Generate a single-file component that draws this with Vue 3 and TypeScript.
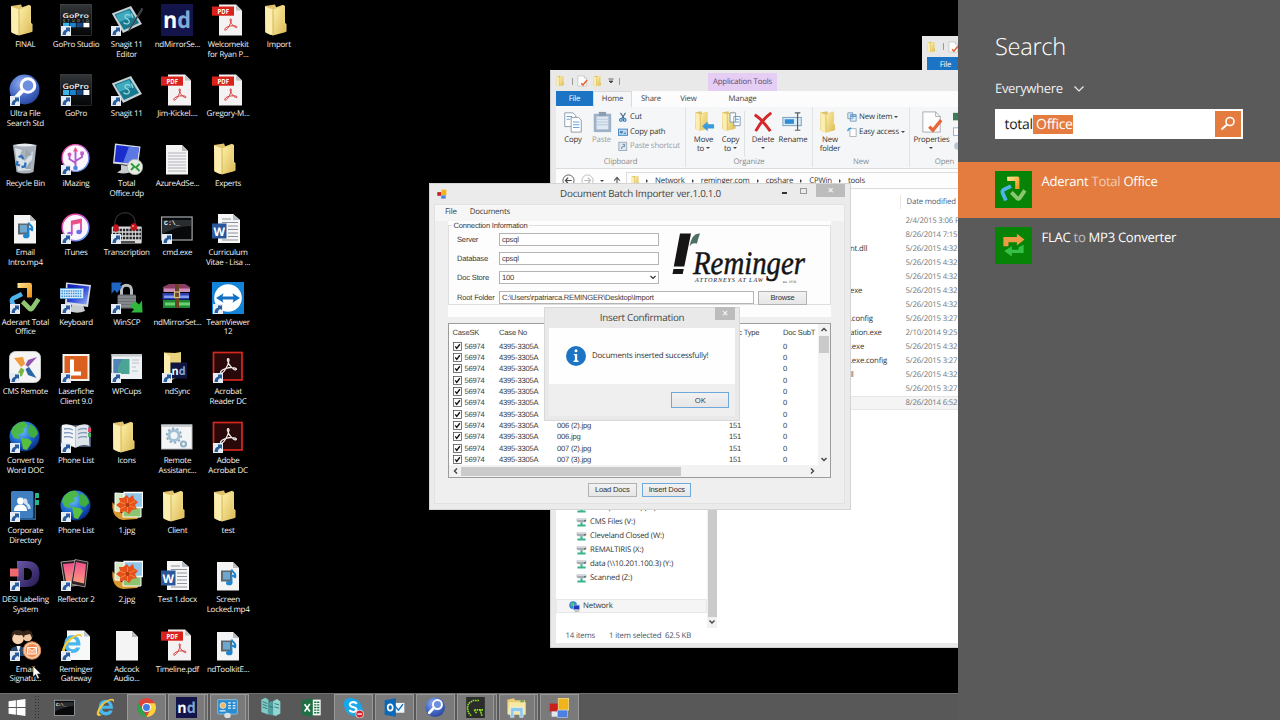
<template>
  <div class="desktop">
    <svg class="sprite" aria-hidden="true">
      <defs>
        <linearGradient id="gFolder" x1="0" x2="1" y1="0" y2="1">
          <stop offset="0" stop-color="#fdf0a8" />
          <stop offset="1" stop-color="#dcb955" />
        </linearGradient>
        <linearGradient id="gDark" x1="0" x2="0" y1="0" y2="1">
          <stop offset="0" stop-color="#34383b" />
          <stop offset="0.5" stop-color="#15181a" />
          <stop offset="1" stop-color="#050607" />
        </linearGradient>
        <linearGradient id="gScreen" x1="0" x2="1" y1="0" y2="1">
          <stop offset="0" stop-color="#0a16a8" />
          <stop offset="0.5" stop-color="#2c48d8" />
          <stop offset="1" stop-color="#9cb8f6" />
        </linearGradient>
        <linearGradient id="gRing" x1="0" x2="1" y1="0" y2="1">
          <stop offset="0" stop-color="#ff4f8d" />
          <stop offset="0.5" stop-color="#c75ae0" />
          <stop offset="1" stop-color="#38b8f8" />
        </linearGradient>
        <linearGradient id="gReflect" x1="0" x2="0" y1="0" y2="1">
          <stop offset="0" stop-color="#ee4f8c" />
          <stop offset="1" stop-color="#ff9c7c" />
        </linearGradient>
        <linearGradient id="gOrange" x1="0" x2="1" y1="0" y2="1">
          <stop offset="0" stop-color="#ffdf8c" />
          <stop offset="1" stop-color="#f09418" />
        </linearGradient>
        <linearGradient id="gDesi" x1="0" x2="1" y1="0" y2="1">
          <stop offset="0" stop-color="#6a58a8" />
          <stop offset="1" stop-color="#241850" />
        </linearGradient>
        <radialGradient id="gGlobe" cx="0.4" cy="0.3" r="0.7">
          <stop offset="0" stop-color="#6cc4fa" />
          <stop offset="0.6" stop-color="#1c68d0" />
          <stop offset="1" stop-color="#0a2f86" />
        </radialGradient>
        <radialGradient id="gFind" cx="0.4" cy="0.3" r="0.75">
          <stop offset="0" stop-color="#93aef0" />
          <stop offset="0.6" stop-color="#4468c4" />
          <stop offset="1" stop-color="#27439c" />
        </radialGradient>
      </defs>

      <symbol id="shortcut" viewBox="0 0 10 10">
        <rect width="10" height="10" fill="#e4ebf3" />
        <path d="M1.500 9C1.500 6 3 4 5 3.800V1.400H9V6L7.400 4.900C5.400 5.600 4.800 7 5 9Z" fill="#2a5c9e" />
      </symbol>
      <symbol id="folder" viewBox="0 0 32 32">
        <path d="M2 2L12 0.500L13 3V26L7.500 31L2 28Z" fill="#dfc26a" />
        <path d="M12.500 3.500L20 0.800L22 2V19L23.500 20V27.500L12 30Z" fill="#ecd683" />
        <path d="M2 2.500L10 5.500V31.500L2.800 28.800Z" fill="#fbeeae" />
        <path d="M10 5.500L20.500 2.500V19L22.800 20V28L10 31.500Z" fill="url(#gFolder)" />
        <path d="M10 5.500V31" stroke="#c9a748" stroke-width="0.800" />
      </symbol>
      <symbol id="gopro" viewBox="0 0 32 32">
        <rect x="0.200" y="0.200" width="31.500" height="31.500" fill="url(#gDark)" stroke="#4a4d50" stroke-width="0.500" />
        <text x="2.500" y="15" font-size="7.500" font-family="Open Sans, sans-serif" font-weight="600" textLength="26.500" lengthAdjust="spacingAndGlyphs" fill="#f2f2f2">GoPro</text>
        <rect x="3" y="16" width="6" height="5" fill="#3cb4e8" />
        <rect x="9.800" y="16" width="6" height="5" fill="#1d84cc" />
        <rect x="16.600" y="16" width="6" height="5" fill="#15498c" />
        <rect x="23.400" y="16" width="6" height="5" fill="#fff" />
      </symbol>
      <symbol id="goprostudio" viewBox="0 0 32 32">
        <rect x="0.200" y="0.200" width="31.500" height="31.500" fill="url(#gDark)" stroke="#55585b" stroke-width="0.500" />
        <text x="2.500" y="13.500" font-size="6.500" font-family="Open Sans, sans-serif" font-weight="600" textLength="26.500" lengthAdjust="spacingAndGlyphs" fill="#f2f2f2">GoPro</text>
        <text x="3" y="17.600" font-size="3.800" font-family="Open Sans, sans-serif" textLength="26" fill="#c8c8c8">STUDIO</text>
        <rect x="3" y="18.800" width="6" height="4.500" fill="#3cb4e8" />
        <rect x="9.800" y="18.800" width="6" height="4.500" fill="#1d84cc" />
        <rect x="16.600" y="18.800" width="6" height="4.500" fill="#15498c" />
        <rect x="23.400" y="18.800" width="6" height="4.500" fill="#fff" />
      </symbol>
      <symbol id="snagit" viewBox="0 0 32 32">
        <path d="M0.800 9.500L20 2L31 20L12 29Z" fill="#c9d0d4" />
        <path d="M3.500 10.500L18.800 4.500L28 19L13 26Z" fill="#17788e" />
        <path d="M5 11L18 6L22 13L8 18Z" fill="#3fa9bd" />
        <path d="M19 11.500C16 9.500 12.500 11.500 14.500 14C17 15.500 20 17 17.500 19.500C15.500 20.500 13.500 19.500 12.500 18.500M20.500 9.500L22 14" fill="none" stroke="#9fd6e0" stroke-width="1.200" />
      </symbol>
      <symbol id="snagedit" viewBox="0 0 32 32">
        <use href="#snagit" width="32" height="32" />
        <path d="M31 4L18 25L17 27L18.500 26.500L31.500 6Z" fill="#2a2f33" stroke="#6a747a" stroke-width="0.500" />
      </symbol>
      <symbol id="nd" viewBox="0 0 32 32">
        <rect width="32" height="32" fill="#13144a" />
        <text x="2" y="24" font-size="23" font-family="Open Sans, sans-serif" font-weight="700" textLength="28" lengthAdjust="spacingAndGlyphs" fill="#fff">n<tspan fill="#7fa9d8">d</tspan></text>
      </symbol>
      <symbol id="tristar" viewBox="0 0 16 16">
        <path d="M1.500 14C0.500 12 4 10 8 9.300C12 8.800 15.500 9.500 15 10.800C14 12.500 8.500 8 7.300 3C7 1 8.800 0.800 8.600 3C8 7.500 3.500 15 1.500 14Z" fill="none" stroke="currentColor" stroke-width="1.100" />
      </symbol>
      <symbol id="page" viewBox="0 0 32 32">
        <path d="M5 2H21L27 8V31.500H5Z" fill="#f4f4f4" />
        <path d="M21 2V8H27Z" fill="#b9bcc0" />
      </symbol>
      <symbol id="pdf" viewBox="0 0 32 32">
        <path d="M7 0.500H24L30 6.500V31.500H7Z" fill="#f3f1f1" />
        <path d="M24 0.500V6.500H30Z" fill="#c4c4c4" />
        <rect y="2.500" width="22" height="9.200" fill="#d8221c" />
        <text x="5.500" y="9.800" font-size="7" font-family="Open Sans, sans-serif" font-weight="700" textLength="11.500" lengthAdjust="spacingAndGlyphs" fill="#fff">PDF</text>
        <use href="#tristar" x="11.500" y="13.500" width="14.500" height="14.500" color="#d8383a" />
      </symbol>
      <symbol id="finder" viewBox="0 0 32 32">
        <circle cx="15.500" cy="15.500" r="15" fill="url(#gFind)" />
        <path d="M14.500 15.500L6.500 24" stroke="#fff" stroke-width="4.200" stroke-linecap="round" />
        <circle cx="19" cy="11.500" r="6.800" fill="#6d8fe0" stroke="#fff" stroke-width="3" />
      </symbol>
      <symbol id="recycle" viewBox="0 0 32 32">
        <path d="M4 2L27.500 2L24.500 29Q16 32 7.500 29Z" fill="#a9b2ba" />
        <path d="M4 2Q16 5 27.500 2Q16 -1 4 2Z" fill="#e8edf0" />
        <path d="M6 5L13 7L10 14L16 18L24 8L22 27L9 28Z" fill="#d9e1e7" />
        <path d="M17 6L23 12L16 14ZM20 20L23 17L22 26L16 26Z" fill="#9aa6b0" />
        <path d="M9.500 14L12.500 13L14.500 16M8.500 18L8 21.500L11 22.500M12.500 24L16 23.500L16.500 19.500" fill="none" stroke="#2f70bd" stroke-width="2.300" />
      </symbol>
      <symbol id="imazing" viewBox="0 0 32 32">
        <circle cx="15.500" cy="15" r="13.400" fill="#fbf7fd" stroke="url(#gRing)" stroke-width="1.400" />
        <path d="M15.500 24V7M15.500 20L9.500 16V12M15.500 18L22 14V11" fill="none" stroke="#b05ad0" stroke-width="1.900" />
        <path d="M15.500 4L18 8.500H13Z" fill="#f0508f" />
        <circle cx="9.500" cy="11.500" r="2" fill="#d856b8" />
        <rect x="20.300" y="8.500" width="3.600" height="3.600" fill="#c85ad0" />
        <circle cx="15.500" cy="25" r="2.300" fill="#4888e0" />
      </symbol>
      <symbol id="monitor" viewBox="0 0 32 32">
        <path d="M10 21L22 22L23 28Q16 32 8 29L11 26Z" fill="#c9cdd2" />
        <path d="M4 0.500L30.500 4L26 24L0.800 19Z" fill="#d7dce2" />
        <path d="M5.300 2L28.800 5L25 21.500L3 17.500Z" fill="url(#gScreen)" />
      </symbol>
      <symbol id="rdp" viewBox="0 0 32 32">
        <path d="M10 22L19 23L20 29Q14 31.500 6 29.500L10 27Z" fill="#c9cdd2" />
        <path d="M4 0.500L29.500 3.500L27 23L2 20.500Z" fill="#d7dce2" />
        <path d="M5.300 2L28 4.800L25.500 21L3.500 18.800Z" fill="#1a2ccc" />
        <path d="M18 3.500L28 4.800L25.500 21L12 19.700Z" fill="#5c78e4" />
        <circle cx="24" cy="24" r="7.700" fill="#e6ece4" stroke="#a8b2a6" stroke-width="0.700" />
        <path d="M20 20.500L23.300 23.500L20 27M28.500 21L25 24.500L28.500 28" fill="none" stroke="#2f9a3c" stroke-width="1.900" />
      </symbol>
      <symbol id="textfile" viewBox="0 0 32 32">
        <use href="#page" width="32" height="32" />
        <path d="M7 10H25M7 13H25M7 16H25M7 19H25M7 22H25M7 25H25M7 28H25" stroke="#a7acb2" stroke-width="0.900" />
      </symbol>
      <symbol id="video" viewBox="0 0 32 32">
        <path d="M5 3H21L27 9V31.500H5Z" fill="#f4f4f4" />
        <path d="M21 3V9H27Z" fill="#b9bcc0" />
        <rect x="9" y="11.500" width="11" height="11" fill="#5c6870" />
        <rect x="11" y="13" width="7" height="7.500" fill="#6fa7cf" />
        <path d="M19.500 10.500C20 14 25 13 23 19C23 16.500 20.500 16.500 19.500 16.500V24" fill="none" stroke="#1e86d0" stroke-width="1.900" />
        <ellipse cx="17.200" cy="24" rx="3.200" ry="2.300" fill="#1e86d0" />
      </symbol>
      <symbol id="itunes" viewBox="0 0 32 32">
        <circle cx="15.500" cy="15.500" r="13.300" fill="#fbf6fc" stroke="url(#gRing)" stroke-width="1.500" />
        <path d="M11.800 22V9.500L21 7.500V20" fill="none" stroke="#d250a8" stroke-width="1.800" />
        <path d="M11.800 9.500L21 7.500V11L11.800 13Z" fill="#ef4f86" />
        <ellipse cx="9.800" cy="22" rx="2.700" ry="2.200" fill="#9a60e0" />
        <ellipse cx="19" cy="20" rx="2.700" ry="2.200" fill="#6c70e8" />
      </symbol>
      <symbol id="headset" viewBox="0 0 32 32">
        <rect x="0.700" y="14.500" width="30" height="17" rx="1" fill="#d6d8da" />
        <path d="M2 18H30M2 22H30M2 26H30" stroke="#222" stroke-width="2.600" stroke-dasharray="2.300 1" />
        <path d="M8 30H24" stroke="#222" stroke-width="1.500" />
        <path d="M4 13C2 -3 26 -4 24 13" fill="none" stroke="#2b2b2f" stroke-width="1.300" />
        <ellipse cx="5" cy="16" rx="2.800" ry="3.800" fill="#c6141c" />
        <ellipse cx="22.800" cy="15" rx="3.300" ry="3.800" fill="#c6141c" />
        <circle cx="22" cy="14" r="1" fill="#ff8c8c" />
      </symbol>
      <symbol id="cmd" viewBox="0 0 32 32">
        <rect x="0.600" y="5" width="30.500" height="23" fill="#08090a" stroke="#a4a8ab" stroke-width="1.200" />
        <path d="M1.500 8H30V14Q16 14 1.500 22Z" fill="#2a2d30" />
        <text x="3" y="13" font-size="6.500" font-family="Liberation Mono, monospace" font-weight="700" fill="#f2f2f2">C:\_</text>
      </symbol>
      <symbol id="word" viewBox="0 0 32 32">
        <path d="M6 2H21L28 8V31H6Z" fill="#f6f6f6" />
        <path d="M21 2V8H28Z" fill="#b6bcc4" />
        <path d="M10 7H19M10 10.500H26M16 14H26M16 17.500H26M16 21H26M16 24.500H26M10 28H26" stroke="#8e949b" stroke-width="1.100" />
        <rect y="11.500" width="14.500" height="15" fill="#2b579a" />
        <text x="1.500" y="23.500" font-size="12" font-family="Open Sans, sans-serif" font-weight="700" textLength="11.500" lengthAdjust="spacingAndGlyphs" fill="#fff">W</text>
      </symbol>
      <symbol id="aderant" viewBox="0 0 32 32">
        <path d="M8.500 3.500L20.500 3.200V15.500" fill="none" stroke="url(#gOrange)" stroke-width="5" stroke-linejoin="round" />
        <path d="M13 12L4 16.500Q2 18 3.500 21L7 29" fill="none" stroke="#4fb4ec" stroke-width="4.500" />
        <path d="M13.500 19.500L20.500 26.500Q22 28 23.500 26L29.500 17" fill="none" stroke="#8cc66f" stroke-width="4.600" />
      </symbol>
      <symbol id="oskeyboard" viewBox="0 0 32 32">
        <path d="M12 22L23 23L25 29Q18 32 10 29.500Z" fill="#c9cdd2" />
        <path d="M6 0.500L31 3L28 25L5 22Z" fill="#d7dce2" />
        <path d="M7.500 2L29.300 4.500L26.500 22.500L7 20Z" fill="url(#gScreen)" />
        <rect y="6.500" width="23.500" height="10" fill="#d8ecfb" stroke="#4b9ade" stroke-width="0.800" />
        <path d="M1.500 9H22M1.500 11.600H22M1.500 14.200H22" stroke="#3c90d8" stroke-width="1.500" stroke-dasharray="1.500 0.800" />
      </symbol>
      <symbol id="winscp" viewBox="0 0 32 32">
        <path d="M10.500 14V8C10.500 1.500 20.500 1.500 20.500 8V14" fill="none" stroke="#b8bcc0" stroke-width="3" />
        <rect x="6.500" y="12.500" width="18.500" height="14" rx="1.500" fill="#6d7175" />
        <path d="M7 15H25M7 18H25M7 21H25M7 24H25" stroke="#9ba0a4" stroke-width="1" />
        <path d="M0.500 0.500H11L9 3L11 5L6 11L3.500 8L0.500 12Z" fill="#1f66c4" />
        <path d="M31.500 30.500H20L23 27.500L19 24L24 19L28 22.500L31 18.500Z" fill="#2fb83c" />
      </symbol>
      <symbol id="winrar" viewBox="0 0 32 32">
        <path d="M2 5L8 2H24L29 5V10H2Z" fill="#8a3f62" />
        <path d="M3 6.500H29V10H3Z" fill="#cf8fb8" />
        <path d="M1.500 11H28V17.500H1.500Z" fill="#2b3fae" />
        <path d="M3 13.500H28V16H3Z" fill="#7f9cf0" />
        <path d="M2 18H29V26H2Z" fill="#1e8a34" />
        <path d="M4 20.500H29V23.500H4Z" fill="#6cd070" />
        <path d="M14 2H18V26H14Z" fill="#6e4426" />
        <rect x="13.500" y="10" width="5" height="5.500" fill="none" stroke="#d8c37c" stroke-width="1.200" />
      </symbol>
      <symbol id="teamviewer" viewBox="0 0 32 32">
        <rect width="32" height="32" fill="#1383d8" />
        <circle cx="16" cy="16" r="13.800" fill="#fff" />
        <path d="M4 16L11.500 11.200L10.500 14.600H21.500L20.500 11.200L28 16L20.500 20.800L21.500 17.400H10.500L11.500 20.800Z" fill="#1470c4" />
      </symbol>
      <symbol id="cms" viewBox="0 0 32 32">
        <rect x="0.500" y="0.500" width="31" height="31" rx="6" fill="#f4f4f4" stroke="#c8c8c8" />
        <path d="M5 7L14 6L16 13L12 16Z" fill="#f09a3c" />
        <path d="M28 6L19 9L16.500 14L19 16Z" fill="#8f55b0" />
        <path d="M6 27L13 25L15.500 19L12 16.500Z" fill="#7bb541" />
        <path d="M27.500 27L19 24L16.500 18L20 16Z" fill="#2a65a8" />
      </symbol>
      <symbol id="laserfiche" viewBox="0 0 32 32">
        <rect x="2.500" y="3" width="27" height="27" fill="#f7f1ec" />
        <rect x="4.500" y="5" width="23" height="23" fill="#d9601f" />
        <path d="M10 8.500H14V20.500H21V24.500H10Z" fill="#fff" />
      </symbol>
      <symbol id="wpcups" viewBox="0 0 32 32">
        <rect x="0.500" y="3" width="30.500" height="25" fill="#eef1f3" />
        <rect x="0.500" y="3" width="30.500" height="2.500" fill="#c4c9ce" />
        <rect x="2.500" y="8" width="16" height="15" fill="#4aa596" />
        <path d="M2.500 8H12Q6 14 7 23H2.500Z" fill="#4f84b4" />
        <path d="M21 9H28M21 12H28M21 16H25M21 20H27" stroke="#b9c0c6" stroke-width="1" />
      </symbol>
      <symbol id="ndsync" viewBox="0 0 32 32">
        <path d="M3 1.500L14 2L20 1V24L9 30L3 27Z" fill="#e8d27c" />
        <path d="M3 1.500L9 5V30L3 27Z" fill="#fbeeae" />
        <rect x="9.500" y="11.500" width="16.500" height="16" fill="#101542" />
        <text x="10.500" y="23.500" font-size="11.500" font-family="Open Sans, sans-serif" font-weight="700" textLength="14" lengthAdjust="spacingAndGlyphs" fill="#fff">n<tspan fill="#7fa9d8">d</tspan></text>
      </symbol>
      <symbol id="acrobat" viewBox="0 0 32 32">
        <rect x="1.500" y="1.500" width="28.500" height="27.500" fill="#290809" stroke="#d4281f" stroke-width="1.700" />
        <use href="#tristar" x="7" y="6" width="18.500" height="18.500" color="#f3eded" />
      </symbol>
      <symbol id="globe" viewBox="0 0 32 32">
        <circle cx="15.500" cy="15.500" r="15" fill="url(#gGlobe)" />
        <path d="M4 6Q10 0 16 1L19 5L14 8L15 11L9 14L11 18L5 17L2 11Z" fill="#4cb848" />
        <path d="M21 3Q28 6 29 13L25 17L20 15L19 9Z" fill="#3fae3f" />
        <path d="M12 17L20 18L23 21L18 29L14 28Z" fill="#58bf3f" />
      </symbol>
      <symbol id="book" viewBox="0 0 32 32">
        <path d="M0.500 6L2 4H29L31 6V26H0.500Z" fill="#44546a" />
        <path d="M2 4Q9 2 15.500 6V27Q9 22 1.500 25Z" fill="#f2f4f6" />
        <path d="M15.500 6Q22 2 28.500 4L29.500 25Q22 22 15.500 27Z" fill="#dfe4ea" />
        <path d="M4 8Q9 7 13 9M4 12Q9 11 13 13M4 16Q9 15 13 17M18 9Q22 7 27 8M18 13Q22 11 27 12M18 17Q22 15 27 16" fill="none" stroke="#7c98b8" stroke-width="1.300" />
        <rect x="28" y="7" width="3" height="4" fill="#e0486c" />
        <rect x="28" y="12" width="3" height="4" fill="#50b060" />
      </symbol>
      <symbol id="gears" viewBox="0 0 32 32">
        <rect x="0.500" y="4" width="30.500" height="24" fill="#f3f5f6" stroke="#b9bec3" />
        <rect x="0.500" y="3.500" width="30.500" height="2.500" fill="#c8cdd2" />
        <circle cx="13" cy="14.500" r="5" fill="none" stroke="#a3c0d4" stroke-width="3" />
        <circle cx="13" cy="14.500" r="7.200" fill="none" stroke="#8aa9c0" stroke-width="1.700" stroke-dasharray="2.300 2.220" />
        <circle cx="22.500" cy="23" r="2.500" fill="none" stroke="#93b2c8" stroke-width="2.200" />
      </symbol>
      <symbol id="directory" viewBox="0 0 32 32">
        <path d="M7 28H25.500V8H27V30H7Z" fill="#2b5f94" />
        <rect x="2" y="1" width="22.500" height="27" rx="1.500" fill="#3f7fc0" />
        <rect x="26" y="3" width="4" height="5" fill="#28b48c" />
        <rect x="26" y="10" width="4" height="5" fill="#28b48c" />
        <circle cx="11.500" cy="11" r="3.400" fill="#fff" />
        <path d="M5 21Q5 14.500 11.500 14.500Q18 14.500 18 21Z" fill="#fff" />
        <path d="M15 8.500Q19 8 18.500 13Q22 15 21.500 19H19Q18.500 15 15 13.500Z" fill="#d3e2f2" />
      </symbol>
      <symbol id="photos" viewBox="0 0 32 32">
        <path d="M1.500 12Q0 28 12 30L26 29L30 25L10 23Z" fill="#d89a30" />
        <path d="M4 3L22 4L21 22L4 21Z" fill="#d5e8c4" stroke="#fff" />
        <path d="M12 12H30V27H12Z" fill="#8cc470" stroke="#fff" />
        <path d="M13 2.500H31.500V17.500H13Z" fill="#8fc6ea" stroke="#fff" stroke-width="1.300" />
        <path d="M16 5L18 8L22 5L23 9L27 12L24 15L26 19L21 20L18 24L14 21L9 23L9 18L5 15L9 12L8 8L12 8Z" fill="#e8501c" />
        <path d="M16.500 8V22M9 12L24 18M24 11L9 19" stroke="#f38a3c" stroke-width="1" />
        <circle cx="16.500" cy="15" r="2" fill="#b03c10" />
      </symbol>
      <symbol id="desi" viewBox="0 0 32 32">
        <path fill-rule="evenodd" d="M8 2H17Q30.500 2 30.500 15Q30.500 28 17 28H8ZM15 9V21H17Q23 21 23 15Q23 9 17 9Z" fill="url(#gDesi)" />
        <rect x="1" y="9.500" width="8.500" height="8" fill="#ee6a70" />
      </symbol>
      <symbol id="reflector" viewBox="0 0 32 32">
        <path d="M1 3L15 1.500L19 26L5 28Z" fill="#241c20" stroke="#c9c4c4" stroke-width="0.800" />
        <path d="M3 5L14 4L17 24L6.500 25Z" fill="url(#gReflect)" />
        <path d="M15 0.500L28 3L25 28L11 25Z" fill="#2c2226" stroke="#b4aaaa" stroke-width="0.800" />
        <path d="M16 3L26 5L24 24.500L13 22Z" fill="url(#gReflect)" />
      </symbol>
      <symbol id="mailsig" viewBox="0 0 32 32">
        <circle cx="18.500" cy="7.500" r="4.800" fill="#f0c8a4" />
        <path d="M13 7Q13 1 19 1Q25 2 23 9L21 5Z" fill="#352319" />
        <path d="M0.500 27Q0 17 9 17Q18 17 18 27Z" fill="#28476e" />
        <path d="M7.500 17L9.500 24L11.500 17Z" fill="#f4f4f4" />
        <circle cx="9" cy="9.500" r="5.800" fill="#f6d2b0" />
        <path d="M3 9Q1 1 9 1Q17 1 15 9L13 6Q8 7 5 5Z" fill="#3c281c" />
        <circle cx="23" cy="21.500" r="8.800" fill="#f6c8a4" stroke="#d9814c" />
        <circle cx="23" cy="21.500" r="6.500" fill="#ee8850" />
        <path d="M18.500 18.500H27.500V25H18.500ZM18.500 18.500L23 22L27.500 18.500" fill="#f8b48c" stroke="#fff3ea" />
      </symbol>
      <symbol id="ielogo" viewBox="0 0 32 32">
        <path fill-rule="evenodd" d="M16 4Q27 4 27.500 18H11Q12 23 17 23Q20 23 21.500 20.500H27Q24.500 28 16.500 28Q5.500 27 5.500 16Q6 5 16 4ZM11 13.500H21.500Q21 8.500 16.300 8.500Q12 8.500 11 13.500Z" fill="#4ab8ee" />
        <path d="M28.500 9Q31 1 23 3Q11 7 5 18Q0 28 5.500 29Q8 29 10.500 27Q4 27 8 19Q14 9 23 5.500Q29 4 28.500 9Z" fill="#f5c838" />
      </symbol>
      <symbol id="iepage" viewBox="0 0 32 32">
        <path d="M7 1.500H24L30 7.500V31H7Z" fill="#f7f8f8" />
        <path d="M24 1.500V7.500H30Z" fill="#c0c5ca" />
        <use href="#ielogo" x="0" y="3" width="24" height="24" />
      </symbol>
      <symbol id="chrome" viewBox="0 0 32 32">
        <circle cx="16" cy="16" r="14.500" fill="#e0433a" />
        <path d="M3.500 8.800L12 22L17 30.500A14.500 14.500 0 0 1 3.500 8.800Z" fill="#2fa14f" />
        <path d="M16 9.500H29A14.500 14.500 0 0 1 16 30.500L22 19Z" fill="#fbd23c" />
        <circle cx="16" cy="16" r="6.800" fill="#fff" />
        <circle cx="16" cy="16" r="5.300" fill="#3f7de0" />
      </symbol>
      <symbol id="panelset" viewBox="0 0 32 32">
        <rect x="1" y="4" width="30" height="22" rx="1" fill="#2c8cd0" stroke="#9ed2f0" />
        <circle cx="9" cy="13" r="4.500" fill="#f0b860" stroke="#e8f4fb" />
        <path d="M17 9H21M17 13H21M17 17H21M24 9H28M24 13H28M24 17H28M4 21H13" stroke="#e8f6ff" stroke-width="2" />
        <ellipse cx="16" cy="28" rx="5" ry="4" fill="#d9dee2" />
      </symbol>
      <symbol id="servers" viewBox="0 0 32 32">
        <path d="M2 4L8 1L13 4V27L2 23Z" fill="#7ecac5" />
        <path d="M12 9L18 6L22 9V29L12 26Z" fill="#4e9c9c" />
        <path d="M20 6L26 3L31 7V25L24 29L20 27Z" fill="#91d6d1" />
        <path d="M4 7L11 10M4 11L11 14M4 15L11 18M22 10L29 12M22 15L29 17M14 14L20 16" stroke="#346f74" stroke-width="1.300" />
      </symbol>
      <symbol id="excel" viewBox="0 0 32 32">
        <rect x="14" y="4" width="16" height="24" fill="#f4f8f5" />
        <path d="M20 8H28M20 12H28M20 16H28M20 20H28M20 24H28" stroke="#217346" stroke-width="2.200" stroke-dasharray="3.500 1" />
        <path d="M1 5L18 2V30L1 27Z" fill="#1f7044" />
        <path d="M5.500 11L13.500 22M13.500 10.500L5.500 22" stroke="#fff" stroke-width="2.500" />
      </symbol>
      <symbol id="skype" viewBox="0 0 32 32">
        <rect x="1" y="1" width="20" height="20" rx="10" fill="#18a8ea" />
        <rect x="10" y="10" width="20" height="20" rx="10" fill="#18a8ea" />
        <circle cx="15.500" cy="15.500" r="12.500" fill="#18a8ea" />
        <path d="M21 10.500Q19 7.500 15 7.800Q10 8.500 10.500 12Q11 14.500 16 15.500Q21 16.500 20.500 19.500Q19.500 23 15 22.800Q11 22.500 10 19.500" fill="none" stroke="#fff" stroke-width="3.200" />
        <circle cx="25.500" cy="26" r="6" fill="#d21f2c" stroke="#fff" />
        <path d="M22 26H29" stroke="#fff" stroke-width="2" />
      </symbol>
      <symbol id="outlook" viewBox="0 0 32 32">
        <rect x="14" y="9" width="17" height="15" fill="#eef5fb" />
        <path d="M17 14L22 20L29 11" fill="none" stroke="#0b6cbd" stroke-width="2" />
        <path d="M1 5L18 2V30L1 27Z" fill="#0a68b8" />
        <ellipse cx="9.500" cy="16" rx="3.800" ry="4.800" fill="none" stroke="#fff" stroke-width="2.600" />
      </symbol>
      <symbol id="gdots" viewBox="0 0 32 36">
        <rect width="32" height="36" fill="#2b2d2b" />
        <path d="M22 6L12 6L4 11L2 19L4 27L9 33M14 22H30M24 22L27 32M14 22L18 28" fill="none" stroke="#8be01c" stroke-width="2.800" stroke-dasharray="2.800 1.200" />
      </symbol>
      <symbol id="explorer" viewBox="0 0 32 32">
        <path d="M2 4L12 2L14 5H29V26H2Z" fill="#e9cd74" />
        <path d="M4 8H30V27H3Z" fill="#f7e9a4" />
        <rect x="22" y="5" width="5" height="3" fill="#58a85c" />
        <path d="M7 31V18Q7 16 9 16H24Q26 16 26 18V31H21V22H12V31Z" fill="#8cc8ea" stroke="#e2f4fd" />
      </symbol>
      <symbol id="winforms" viewBox="0 0 32 32">
        <rect x="1" y="10" width="13" height="12" fill="#c8201c" />
        <rect x="14" y="2" width="16" height="18" fill="#f0b41c" stroke="#fae49c" />
        <rect x="4" y="22" width="9" height="8" fill="#e4e8ee" />
        <rect x="13" y="20" width="15" height="11" fill="#4c7fe0" stroke="#b5ccf8" />
      </symbol>
      <symbol id="winlogo" viewBox="0 0 32 32">
        <path d="M1 5L14 3.200V15.300H1ZM15.500 3L31 1V15.300H15.500ZM1 16.700H14V28.800L1 27ZM15.500 16.700H31V31L15.500 29Z" fill="#fff" />
      </symbol>
      <symbol id="convert" viewBox="0 0 32 32">
        <path d="M4 17V6H20V2L29 9L20 16V12H10V17Z" fill="#f09a48" />
        <path d="M28 15V25H14V29L5 22.500L14 17V21H22V18Z" fill="#37c048" />
      </symbol>
      <symbol id="check" viewBox="0 0 24 24">
        <path d="M2 1H16L21 6V23H2Z" fill="#fdfdfd" stroke="#a9a9a9" />
        <path d="M16 1V6H21" fill="none" stroke="#a9a9a9" />
        <path d="M9 17L13 21L22 10" fill="none" stroke="#e4683c" stroke-width="3.600" />
      </symbol>
      <symbol id="netdrive" viewBox="0 0 16 14">
        <path d="M1 2H15V6L13 7.500H3L1 6Z" fill="#a7adb2" />
        <path d="M2 1.500H14V4H2Z" fill="#d8dcdf" />
        <rect x="12" y="4.500" width="2" height="1.500" fill="#333" />
        <path d="M8 7.500V11M2 12H14" stroke="#38b48c" stroke-width="3" />
      </symbol>
    </svg>

    <main class="icons">
      <div v-for="(row, r) in rows" :key="r" class="icon-row">
        <div v-for="(item, i) in row" :key="i" class="icon-cell">
          <div class="icon-art">
            <svg class="art"><use :href="`#${item.icon}`" /></svg>
            <svg v-if="item.link" class="arrow"><use href="#shortcut" /></svg>
          </div>
          <span class="icon-label">{{ item.label }}</span>
        </div>
      </div>
    </main>

    <section class="window behind">
      <div class="quick">
        <svg class="q-icon"><use href="#folder" /></svg>
        <i class="q-sep"></i>
        <svg class="q-icon"><use href="#check" /></svg>
      </div>
      <div class="tab-row"><span class="tab file">File</span></div>
    </section>

    <section class="window explorer">
      <header class="ex-title">
        <div class="quick">
          <svg class="q-icon"><use href="#folder" /></svg>
          <i class="q-sep"></i>
          <svg class="q-icon"><use href="#check" /></svg>
          <svg class="q-icon"><use href="#folder" /></svg>
          <svg class="q-more" viewBox="0 0 6 6"><path d="M0.500 1H5.500M1 3L3 5L5 3Z" stroke="#444" fill="#444" stroke-width="0.800" /></svg>
          <i class="q-sep"></i>
        </div>
        <span class="app-tools">Application Tools</span>
      </header>
      <nav class="tab-row">
        <span class="tab file">File</span>
        <span class="tab home">Home</span>
        <span class="tab share">Share</span>
        <span class="tab view">View</span>
        <span class="tab manage">Manage</span>
      </nav>
      <div class="ribbon">
        <div class="group clipboard">
          <div class="tools">
            <div class="tool copy">
              <svg class="big" viewBox="0 0 24 24">
                <path d="M3 2H12L15 5V17H3Z" fill="#fff" stroke="#8b98a6" />
                <path d="M10 7H18L21 10V23H10Z" fill="#fff" stroke="#8b98a6" />
                <path d="M5 6H11M5 9H9M12 12H19M12 15H19M12 18H19" stroke="#6ea3d8" stroke-width="1.300" />
              </svg>
              <span>Copy</span>
            </div>
            <div class="tool paste muted">
              <svg class="big" viewBox="0 0 24 24">
                <rect x="3" y="3" width="19" height="20" fill="#8fa6bf" />
                <path d="M6 6H19V20H6Z" fill="#dde7f2" />
                <path d="M6 9H19M6 12H19M6 15H19" stroke="#aabfd6" />
                <rect x="8.500" y="1" width="8" height="4.500" fill="#7a8ea4" />
              </svg>
              <span>Paste</span>
            </div>
            <div class="mini-list">
              <div class="mini">
                <svg viewBox="0 0 12 12"><path d="M3 1L7.500 8M9 1L4.500 8" stroke="#4c6b8a" stroke-width="1.300" /><circle cx="3.500" cy="9.500" r="1.600" fill="none" stroke="#2778c0" stroke-width="1.300" /><circle cx="8" cy="9.500" r="1.600" fill="none" stroke="#2778c0" stroke-width="1.300" /></svg>
                Cut
              </div>
              <div class="mini">
                <svg viewBox="0 0 12 12"><rect x="0.500" y="2.500" width="11" height="7.500" fill="#b9d8f2" stroke="#3a7fc0" /><path d="M2.500 7.500L3.500 5L4.500 7.500L5.500 5M7 7.500H9.500" stroke="#1c4f86" fill="none" stroke-width="0.900" /></svg>
                Copy path
              </div>
              <div class="mini muted">
                <svg viewBox="0 0 12 12"><rect x="1" y="1.500" width="9.500" height="10" fill="#dde5ee" stroke="#94a5b8" /><path d="M4 9.500Q4 6.500 7.500 6M5.500 4H8V7" stroke="#7088a4" fill="none" stroke-width="1.200" /></svg>
                Paste shortcut
              </div>
            </div>
          </div>
          <span class="group-name">Clipboard</span>
        </div>
        <div class="group organize">
          <div class="tools">
            <div class="tool">
              <svg class="big" viewBox="0 0 24 24">
                <use href="#folder" width="22" height="22" x="1" />
                <path d="M10 16.500L16 11.500V14.500H23V19H16V22Z" fill="#3a9bdc" />
              </svg>
              <span>Move<br />to <b class="caret"></b></span>
            </div>
            <div class="tool">
              <svg class="big" viewBox="0 0 24 24">
                <use href="#folder" width="22" height="22" x="1" />
                <path d="M11 2H17V12H11ZM15 6H22V16H15Z" fill="#fff" stroke="#7d96b0" />
                <path d="M17 9H20.500M17 12H20.500" stroke="#4b8fd0" />
              </svg>
              <span>Copy<br />to <b class="caret"></b></span>
            </div>
            <i class="tool-sep"></i>
            <div class="tool">
              <svg class="big" viewBox="0 0 24 24"><path d="M3 4Q11 9 20 22M21 2Q11 9 4 22" fill="none" stroke="#d4282a" stroke-width="3.200" /></svg>
              <span>Delete<br /><b class="caret"></b></span>
            </div>
            <div class="tool rename">
              <svg class="big" viewBox="0 0 24 24">
                <rect x="1" y="7" width="20" height="9" fill="#d8ecfa" stroke="#7597b4" />
                <rect x="3" y="9" width="10" height="5" fill="#2f8cd4" />
                <path d="M14 2H20M17 2V21M14 21H20" stroke="#555f68" stroke-width="1.300" />
              </svg>
              <span>Rename</span>
            </div>
          </div>
          <span class="group-name">Organize</span>
        </div>
        <div class="group new">
          <div class="tools">
            <div class="tool newfolder">
              <svg class="big"><use href="#folder" /></svg>
              <span>New<br />folder</span>
            </div>
            <div class="mini-list">
              <div class="mini">
                <svg viewBox="0 0 12 12"><path d="M1 1H7V8H1ZM4 3H11V11H4Z" fill="#e5f1fa" stroke="#6c93b6" /><path d="M4 5H11" stroke="#3d93d2" stroke-width="1.500" /></svg>
                New item <b class="caret"></b>
              </div>
              <div class="mini">
                <svg viewBox="0 0 12 12"><path d="M3.500 2H11V11.500H3.500Z" fill="#fff" stroke="#9aa6b1" /><path d="M1 5Q1 1.500 5 1.500" fill="none" stroke="#3d93d2" stroke-width="1.600" /></svg>
                Easy access <b class="caret"></b>
              </div>
            </div>
          </div>
          <span class="group-name">New</span>
        </div>
        <div class="group open">
          <div class="tools">
            <div class="tool props">
              <svg class="big"><use href="#check" /></svg>
              <span>Properties<br /><b class="caret"></b></span>
            </div>
            <div class="mini-list">
              <div class="mini"><svg viewBox="0 0 12 12"><rect y="1" width="12" height="9" fill="#3c7d58" /></svg></div>
              <div class="mini"><svg viewBox="0 0 12 12"><rect x="0.500" y="1" width="11" height="9" fill="#fff" stroke="#7fa4d8" /></svg></div>
              <div class="mini"><svg viewBox="0 0 12 12"><circle cx="6" cy="6" r="4.500" fill="#b7c4d4" /></svg></div>
            </div>
          </div>
          <span class="group-name">Open</span>
        </div>
      </div>
      <div class="address">
        <svg class="nav-btn" viewBox="0 0 14 14"><circle cx="7" cy="7" r="6" fill="none" stroke="#555" /><path d="M10.500 7H4M6.500 4L3.800 7L6.500 10" fill="none" stroke="#444" stroke-width="1.300" /></svg>
        <svg class="nav-btn off" viewBox="0 0 14 14"><circle cx="7" cy="7" r="6" fill="none" stroke="#bbb" /><path d="M3.500 7H10M7.500 4L10.200 7L7.500 10" fill="none" stroke="#bbb" stroke-width="1.300" /></svg>
        <b class="caret"></b>
        <svg class="up" viewBox="0 0 10 12"><path d="M5 11V2M1.500 5.500L5 1.500L8.500 5.500" fill="none" stroke="#555" stroke-width="1.400" /></svg>
        <div class="crumbs">
          <svg class="q-icon"><use href="#folder" /></svg>
          <template v-for="crumb in crumbs" :key="crumb">
            <b class="chev"></b><span>{{ crumb }}</span>
          </template>
        </div>
      </div>
      <div class="ex-body">
        <aside class="tree">
          <div v-for="drive in drives" :key="drive" class="drive">
            <svg><use href="#netdrive" /></svg>{{ drive }}
          </div>
          <div class="network">
            <svg viewBox="0 0 12 12"><circle cx="4.500" cy="4.500" r="4.200" fill="#2d8ad0" /><path d="M2 2L6 1.500L5 5L2 6Z" fill="#58c070" /><rect x="5" y="4.500" width="6.500" height="5" fill="#2038c0" stroke="#b4bcd0" stroke-width="0.800" /><path d="M6 11H11" stroke="#8a929c" /></svg>
            Network
          </div>
        </aside>
        <div class="tree-scroll">
          <div class="tree-thumb"></div>
          <svg viewBox="0 0 8 8"><path d="M1.500 2.500L4 5L6.500 2.500" fill="none" stroke="#444" stroke-width="1.400" /></svg>
        </div>
        <div class="files">
          <div class="file-row file-head"><span></span><span>Date modified</span></div>
          <div v-for="(f, i) in files" :key="i" class="file-row" :class="{ picked: i === files.length - 1 }">
            <span class="fname">{{ f.name }}</span><span class="fdate">{{ f.date }}</span>
          </div>
        </div>
      </div>
      <footer class="status"><span>14 items</span><span>1 item selected&nbsp; 62.5 KB</span></footer>
    </section>

    <section class="window importer">
      <header class="im-title">
        <svg class="app-icon"><use href="#winforms" /></svg>
        <span class="im-name">Document Batch Importer ver.1.0.1.0</span>
        <i class="min"></i>
        <i class="max"></i>
        <span class="close">✕</span>
      </header>
      <div class="im-body">
        <div class="menu"><span>File</span><span>Documents</span></div>
        <fieldset class="conn">
          <legend>Connection Information</legend>
          <div class="conn-top">
            <div class="fields">
              <label>Server</label><div class="input">cpsql</div>
              <label>Database</label><div class="input">cpsql</div>
              <label>Doc Store</label>
              <div class="input select">100<svg viewBox="0 0 8 8"><path d="M1.500 2.500L4 5L6.500 2.500" fill="none" stroke="#333" stroke-width="1.200" /></svg></div>
            </div>
            <svg class="logo" viewBox="0 0 136 56">
              <path d="M8 2.500H19L12.300 35.500H1.800ZM1.500 38H11.700L10.700 43H0.500Z" fill="#161414" />
              <path d="M28 2.500Q20 1.500 17.500 15.500Q20 11 25 12.500Q26 8 28 2.500Z" fill="#4e6f65" />
              <text x="21" y="43" font-size="33" font-family="Liberation Serif, serif" font-style="italic" textLength="112" lengthAdjust="spacingAndGlyphs" fill="#161414" stroke="#161414" stroke-width="0.500">Reminger</text>
              <text x="23" y="51" font-size="6.200" font-family="Liberation Serif, serif" font-style="italic" textLength="68" fill="#161414">ATTORNEYS AT LAW</text>
              <text x="111" y="51.500" font-size="3.500" font-family="Liberation Serif, serif" textLength="13" lengthAdjust="spacingAndGlyphs" fill="#333">est. 1958</text>
            </svg>
          </div>
          <div class="root">
            <label>Root Folder</label>
            <div class="input path">C:\Users\rpatriarca.REMINGER\Desktop\Import</div>
            <button type="button" class="btn browse">Browse</button>
          </div>
        </fieldset>
        <div class="list">
          <div class="list-top">
            <div class="table">
              <div class="tr th"><span>CaseSK</span><span>Case No</span><span></span><span>Doc Type</span><span>Doc SubT</span></div>
              <div v-for="(doc, i) in docs" :key="i" class="tr">
                <span class="sk"><svg viewBox="0 0 10 10"><rect x="0.500" y="0.500" width="9" height="9" fill="#fff" stroke="#444" stroke-width="0.800" /><path d="M2.500 4.800L4.200 7L7.600 2.500" fill="none" stroke="#111" stroke-width="1.500" /></svg>56974</span>
                <span>4395-3305A</span><span>{{ doc.name }}</span><span>{{ doc.type }}</span><span>0</span>
              </div>
            </div>
            <div class="vbar">
              <svg viewBox="0 0 8 8"><path d="M1.500 5.500L4 3L6.500 5.500" fill="none" stroke="#444" stroke-width="1.400" /></svg>
              <div class="vthumb"></div>
              <svg viewBox="0 0 8 8"><path d="M1.500 2.500L4 5L6.500 2.500" fill="none" stroke="#444" stroke-width="1.400" /></svg>
            </div>
          </div>
          <div class="hbar">
            <svg viewBox="0 0 8 8"><path d="M5.500 1.500L3 4L5.500 6.500" fill="none" stroke="#444" stroke-width="1.400" /></svg>
            <div class="hthumb"></div>
            <svg viewBox="0 0 8 8"><path d="M2.500 1.500L5 4L2.500 6.500" fill="none" stroke="#444" stroke-width="1.400" /></svg>
          </div>
        </div>
        <div class="actions">
          <button type="button" class="btn">Load Docs</button>
          <button type="button" class="btn focus">Insert Docs</button>
        </div>
      </div>
    </section>

    <section class="window confirm">
      <header class="cf-title">Insert Confirmation<span class="close">✕</span></header>
      <div class="cf-body">
        <svg viewBox="0 0 20 20"><circle cx="10" cy="10" r="10" fill="#1c74c4" /><circle cx="10" cy="4.800" r="1.500" fill="#fff" /><path d="M7.800 8H11.200V14.500H12.500V16H7.500V14.500H8.900V9.300H7.800Z" fill="#fff" /></svg>
        Documents inserted successfully!
      </div>
      <footer class="cf-foot"><button type="button" class="btn ok">OK</button></footer>
    </section>

    <aside class="search">
      <h1>Search</h1>
      <div class="scope">Everywhere<svg viewBox="0 0 12 8"><path d="M1.500 1.500L6 6L10.500 1.500" fill="none" stroke="#eee" stroke-width="1.200" /></svg></div>
      <div class="box">
        <span class="typed">total</span><span class="hint">&nbsp;Office</span>
        <span class="go">
          <svg viewBox="0 0 16 16"><circle cx="10" cy="5.500" r="4" fill="none" stroke="#fff" stroke-width="1.600" /><path d="M7 8.500L1.500 13.500" stroke="#fff" stroke-width="2" /></svg>
        </span>
      </div>
      <div class="results">
        <div class="result active">
          <span class="tile"><svg><use href="#aderant" /></svg></span>
          <span class="rname">Aderant <em>Total</em> Office</span>
        </div>
        <div class="result">
          <span class="tile"><svg><use href="#convert" /></svg></span>
          <span class="rname">FLAC <em>to</em> MP3 Converter</span>
        </div>
      </div>
    </aside>

    <footer class="taskbar">
      <div class="start"><svg><use href="#winlogo" /></svg></div>
      <i class="grip"></i>
      <div v-for="t in tasks" :key="t.icon" class="task" :class="{ open: t.open, stack: t.stack }">
        <svg><use :href="`#${t.icon}`" /></svg>
      </div>
    </footer>

    <svg class="cursor" viewBox="0 0 10 15"><path d="M1 1V12L3.700 9.500L5.500 13.800L7.300 13L5.500 8.900H9Z" fill="#fff" stroke="#222" stroke-width="0.600" /></svg>
  </div>
</template>

<script setup lang="ts">
interface DesktopItem {
  icon: string
  label: string
  link?: boolean
}

interface FileItem {
  name: string
  date: string
}

interface DocItem {
  name: string
  type: string
}

interface Task {
  icon: string
  open?: boolean
  stack?: boolean
}

const rows: DesktopItem[][] = [
  [
    { icon: 'folder', label: 'FINAL' },
    { icon: 'goprostudio', label: 'GoPro Studio', link: true },
    { icon: 'snagedit', label: 'Snagit 11\nEditor', link: true },
    { icon: 'nd', label: 'ndMirrorSe...' },
    { icon: 'pdf', label: 'Welcomekit\nfor Ryan P...' },
    { icon: 'folder', label: 'Import' },
  ],
  [
    { icon: 'finder', label: 'Ultra File\nSearch Std', link: true },
    { icon: 'gopro', label: 'GoPro', link: true },
    { icon: 'snagit', label: 'Snagit 11', link: true },
    { icon: 'pdf', label: 'Jim-Kickel....' },
    { icon: 'pdf', label: 'Gregory-M...' },
  ],
  [
    { icon: 'recycle', label: 'Recycle Bin' },
    { icon: 'imazing', label: 'iMazing', link: true },
    { icon: 'rdp', label: 'Total\nOffice.rdp' },
    { icon: 'textfile', label: 'AzureAdSe...' },
    { icon: 'folder', label: 'Experts' },
  ],
  [
    { icon: 'video', label: 'Email\nIntro.mp4' },
    { icon: 'itunes', label: 'iTunes', link: true },
    { icon: 'headset', label: 'Transcription', link: true },
    { icon: 'cmd', label: 'cmd.exe', link: true },
    { icon: 'word', label: 'Curriculum\nVitae - Lisa ...' },
  ],
  [
    { icon: 'aderant', label: 'Aderant Total\nOffice', link: true },
    { icon: 'oskeyboard', label: 'Keyboard', link: true },
    { icon: 'winscp', label: 'WinSCP', link: true },
    { icon: 'winrar', label: 'ndMirrorSet...' },
    { icon: 'teamviewer', label: 'TeamViewer\n12', link: true },
  ],
  [
    { icon: 'cms', label: 'CMS Remote', link: true },
    { icon: 'laserfiche', label: 'Laserfiche\nClient 9.0', link: true },
    { icon: 'wpcups', label: 'WPCups', link: true },
    { icon: 'ndsync', label: 'ndSync', link: true },
    { icon: 'acrobat', label: 'Acrobat\nReader DC', link: true },
  ],
  [
    { icon: 'globe', label: 'Convert to\nWord DOC', link: true },
    { icon: 'book', label: 'Phone List', link: true },
    { icon: 'folder', label: 'Icons' },
    { icon: 'gears', label: 'Remote\nAssistanc...' },
    { icon: 'acrobat', label: 'Adobe\nAcrobat DC', link: true },
  ],
  [
    { icon: 'directory', label: 'Corporate\nDirectory', link: true },
    { icon: 'globe', label: 'Phone List', link: true },
    { icon: 'photos', label: '1.jpg' },
    { icon: 'folder', label: 'Client' },
    { icon: 'folder', label: 'test' },
  ],
  [
    { icon: 'desi', label: 'DESI Labeling\nSystem', link: true },
    { icon: 'reflector', label: 'Reflector 2', link: true },
    { icon: 'photos', label: '2.jpg' },
    { icon: 'word', label: 'Test 1.docx' },
    { icon: 'video', label: 'Screen\nLocked.mp4' },
  ],
  [
    { icon: 'mailsig', label: 'Email\nSignatu...', link: true },
    { icon: 'iepage', label: 'Reminger\nGateway', link: true },
    { icon: 'page', label: 'Adcock\nAudio...' },
    { icon: 'pdf', label: 'Timeline.pdf' },
    { icon: 'video', label: 'ndToolkitE...' },
  ],
]

const crumbs = ['Network', 'reminger.com', 'cpshare', 'CPWin', 'tools']

const drives = [
  'Data (\\\\Atlanta) (U:)',
  'CMS Files (V:)',
  'Cleveland Closed (W:)',
  'REMALTIRIS (X:)',
  'data (\\\\10.201.100.3) (Y:)',
  'Scanned (Z:)',
]

const files: FileItem[] = [
  { name: '', date: '2/4/2015 3:06 PM' },
  { name: '', date: '8/26/2014 7:15' },
  { name: 'nt.dll', date: '5/26/2015 4:32' },
  { name: '', date: '5/26/2015 4:32' },
  { name: '', date: '5/26/2015 4:32' },
  { name: 'exe', date: '5/26/2015 4:32' },
  { name: '', date: '5/26/2015 4:32' },
  { name: '.config', date: '5/26/2015 3:27' },
  { name: 'ation.exe', date: '2/10/2014 9:25' },
  { name: '.exe', date: '5/26/2015 4:32' },
  { name: '.exe.config', date: '5/26/2015 3:27' },
  { name: 'll', date: '5/26/2015 4:32' },
  { name: '', date: '5/26/2015 3:27' },
  { name: '', date: '8/26/2014 6:52' },
]

const docs: DocItem[] = [
  ...Array.from({ length: 7 }, () => ({ name: '', type: '' })),
  { name: '006 (2).jpg', type: '151' },
  { name: '006.jpg', type: '151' },
  { name: '007 (2).jpg', type: '151' },
  { name: '007 (3).jpg', type: '151' },
]

const tasks: Task[] = [
  { icon: 'cmd' },
  { icon: 'ielogo' },
  { icon: 'chrome', open: true },
  { icon: 'nd', open: true, stack: true },
  { icon: 'panelset', open: true, stack: true },
  { icon: 'servers' },
  { icon: 'excel' },
  { icon: 'skype', open: true },
  { icon: 'outlook', open: true },
  { icon: 'finder', open: true },
  { icon: 'gdots', open: true, stack: true },
  { icon: 'explorer', open: true, stack: true },
  { icon: 'winforms', open: true },
]
</script>

<style>
body {
  background: #000;
}
</style>

<style scoped>
* {
  box-sizing: border-box;
}

.desktop {
  position: relative;
  width: 1280px;
  height: 720px;
  overflow: hidden;
  background: #000;
  font-family: 'Open Sans', 'Noto Sans', sans-serif;
  font-size: 7.8px;
  letter-spacing: -0.18px;
  color: #333;
  text-rendering: geometricPrecision;
}

.sprite {
  position: absolute;
  width: 0;
  height: 0;
}

svg {
  flex: none;
  letter-spacing: 0;
}

.icons {
  padding-top: 4.3px;
}

.icon-row {
  display: flex;
  height: 69.4px;
}

.icon-cell {
  display: flex;
  flex-direction: column;
  align-items: center;
  width: 50.7px;
}

.icon-art {
  position: relative;
  width: 32px;
  height: 32px;
}

.art {
  display: block;
  width: 32px;
  height: 32px;
}

.arrow {
  position: absolute;
  left: 0.5px;
  bottom: 0;
  width: 10px;
  height: 10px;
}

.icon-label {
  margin-top: 3.7px;
  color: #f4f4f4;
  font-size: 8px;
  letter-spacing: -0.26px;
  line-height: 9.9px;
  text-align: center;
  white-space: pre;
}

.window {
  position: absolute;
  display: flex;
  flex-direction: column;
}

.behind {
  left: 922px;
  top: 36px;
  width: 200px;
  height: 40px;
  padding-left: 5px;
  background: #e8e8e8;
}

.explorer {
  left: 550px;
  top: 70px;
  width: 480px;
  height: 578px;
  padding: 0 6px 4px 5px;
  background: #e9e9e9;
  border: 1px solid #cfcfcf;
  border-top-color: #e9e9e9;
}

.quick {
  display: flex;
  align-items: center;
  gap: 4.500px;
  height: 20px;
}

.behind .quick {
  height: 21px;
}

.q-icon {
  width: 11px;
  height: 12px;
}

.q-more {
  width: 6px;
  height: 6px;
}

.q-sep {
  width: 1px;
  height: 7px;
  background: #999;
}

.ex-title {
  display: flex;
  align-items: flex-end;
  height: 20px;
}

.ex-title .quick {
  width: 152px;
}

.app-tools {
  width: 69px;
  height: 18px;
  background: #e5cdf4;
  color: #62496f;
  line-height: 18px;
  text-align: center;
}

.tab-row {
  display: flex;
  flex: none;
  height: 16px;
  margin-right: -6px;
  background: #fcfcfc;
  line-height: 16.500px;
  text-align: center;
  color: #444;
}

.file {
  width: 37px;
  height: 15px;
  background: #1b75c4;
  color: #fff;
}

.home {
  width: 39px;
  background: #f5f6f7;
  border: solid #dadbdc;
  border-width: 1px 1px 0;
  line-height: 15px;
}

.share {
  width: 38px;
}

.view {
  width: 37px;
}

.manage {
  width: 71px;
}

.ribbon {
  display: flex;
  flex: none;
  height: 62px;
  margin-right: -6px;
  background: #f5f6f7;
  border: solid #dadbdc;
  border-width: 0 0 1px;
}

.group {
  display: flex;
  flex-direction: column;
  justify-content: space-between;
  flex: none;
  height: 60px;
  padding-top: 4px;
  border-right: 1px solid #e0e2e4;
}

.clipboard {
  width: 130px;
}

.organize {
  width: 127px;
}

.new {
  width: 97px;
}

.open {
  width: 80px;
}

.tools {
  display: flex;
}

.tool {
  display: flex;
  flex-direction: column;
  align-items: center;
  flex: none;
  width: 27px;
  line-height: 9px;
  text-align: center;
  white-space: nowrap;
}

.copy {
  width: 34px;
}

.paste {
  width: 23px;
  margin-right: 5px;
}

.organize .tools {
  padding-left: 4px;
}

.tool-sep + .tool {
  margin-left: 4px;
  width: 28px;
}

.tool.rename {
  width: 32px;
}

.newfolder {
  width: 34px;
}

.props {
  width: 43px;
}

.big {
  width: 22px;
  height: 22px;
  margin-bottom: 2.500px;
}

.tool-sep {
  width: 1px;
  height: 46px;
  background: #dfe1e3;
}

.mini-list {
  display: flex;
  flex-direction: column;
  margin-top: -1.500px;
}

.mini {
  display: flex;
  align-items: center;
  gap: 2px;
  height: 14.7px;
  white-space: nowrap;
}

.mini svg {
  width: 10px;
  height: 10px;
}

.muted {
  color: #9a9a9a;
}

.muted .big {
  opacity: 0.85;
}

.group-name {
  color: #8c8c8c;
  line-height: 9px;
  text-align: center;
}

.open .group-name {
  padding-right: 10px;
}

.caret {
  display: inline-block;
  border: 2px solid transparent;
  border-top: 2.500px solid #444;
  border-bottom: 0;
  vertical-align: 1.500px;
}

.address {
  display: flex;
  align-items: center;
  flex: none;
  height: 21px;
  margin-right: -6px;
  padding: 2px 0 0 6px;
  background: #fdfdfd;
  gap: 6px;
}

.nav-btn {
  width: 13px;
  height: 13px;
}

.up {
  width: 8px;
  height: 10px;
  margin-left: 3px;
}

.crumbs {
  display: flex;
  align-items: center;
  gap: 7px;
  height: 17px;
  flex: 1;
  margin-left: -1px;
  padding-left: 4px;
  border: 1px solid #dcdcdc;
}

.crumbs .q-icon {
  margin-right: -3px;
}

.chev {
  border: 2px solid transparent;
  border-left: 2.500px solid #444;
  border-right: 0;
}

.ex-body {
  display: flex;
  flex: 1;
  min-height: 0;
  margin-right: -6px;
  background: #fff;
}

.tree {
  display: flex;
  flex-direction: column;
  justify-content: flex-end;
  width: 151px;
  padding-bottom: 15px;
}

.drive {
  display: flex;
  align-items: center;
  gap: 3px;
  height: 14px;
  padding-left: 20px;
}

.drive svg {
  width: 11px;
  height: 10px;
}

.network {
  display: flex;
  align-items: center;
  gap: 3px;
  height: 14px;
  margin-top: 14px;
  padding-left: 12px;
  background: #f5f5f5;
  border: 1px solid #e8e8e8;
}

.network svg {
  width: 11px;
  height: 11px;
}

.tree-scroll {
  display: flex;
  flex-direction: column;
  align-items: center;
  width: 10px;
  padding-bottom: 1px;
  background: #f1f1f1;
}

.tree-thumb {
  flex: 1;
  width: 9px;
  background: #cbcbcb;
}

.tree-scroll svg {
  width: 8px;
  height: 10px;
}

.files {
  flex: 1;
  padding-top: 3.500px;
}

.file-row {
  display: flex;
  align-items: center;
  height: 14px;
  color: #777;
  white-space: nowrap;
}

.file-head {
  height: 17px;
  margin-bottom: 3.500px;
  color: #4c607a;
}

.file-row span:first-child {
  width: 183px;
  flex: none;
}

.file-row span.fname {
  padding-left: 133px;
  color: #333;
}

.file-row span + span {
  padding-left: 5.500px;
}

.file-head span + span {
  height: 14px;
  line-height: 14px;
  border-left: 1px solid #e8e8e8;
}

.picked {
  background: #f4f4f4;
  border: solid #e6e6e6;
  border-width: 1px 0;
}

.status {
  display: flex;
  align-items: center;
  flex: none;
  gap: 14px;
  height: 15px;
  margin-right: -6px;
  padding-left: 9.500px;
  background: #fff;
  color: #44546a;
}

.importer {
  left: 429px;
  top: 183px;
  width: 422px;
  height: 327px;
  padding: 0 5px 5px 4px;
  background: #ebebeb;
  border: 1px solid #d4d4d4;
}

.im-title {
  display: flex;
  flex: none;
  height: 20px;
}

.app-icon {
  width: 10px;
  height: 10px;
  margin: 5px 0 0 3px;
}

.im-name {
  flex: 1;
  padding-left: 52px;
  color: #444;
  font-size: 9.8px;
  letter-spacing: -0.24px;
  line-height: 20px;
  text-align: center;
}

.min {
  width: 5px;
  height: 2px;
  margin: 8px 13px 0 0;
  background: #333;
}

.max {
  width: 7px;
  height: 6px;
  margin: 4px 9px 0 0;
  border: 1px solid #999;
}

.close {
  width: 29px;
  height: 13px;
  background: #bcbcbc;
  color: #fff;
  font-family: 'DejaVu Sans', sans-serif;
  font-size: 8px;
  line-height: 13px;
  text-align: center;
}

.im-body {
  display: flex;
  flex-direction: column;
  flex: 1;
  padding: 0 13px;
  background: #efefef;
  border: 1px solid #e2e2e2;
  color: #3c3c3c;
  font-family: 'Liberation Sans', Arial, sans-serif;
  font-size: 7.600px;
  letter-spacing: -0.2px;
}

.menu {
  display: flex;
  gap: 13px;
  flex: none;
  height: 16px;
  margin: 0 -13px;
  padding-left: 10px;
  background: #f6f6f6;
  font-family: 'Open Sans', sans-serif;
  font-size: 7.900px;
  line-height: 15px;
}

.conn {
  display: flex;
  flex-direction: column;
  flex: none;
  position: relative;
  height: 96px;
  margin: 0;
  padding: 0 5px 0 9px;
  background: #fdfdfd;
  border: 0;
}

.conn::before {
  content: '';
  position: absolute;
  inset: 4px 0 0;
  border: 1px solid #dedede;
}

.conn legend {
  position: absolute;
  left: 4px;
  top: 0;
  padding: 0 1.500px;
  background: #fdfdfd;
  line-height: 9px;
}

.conn-top {
  display: flex;
  padding-top: 12px;
}

.fields {
  display: grid;
  grid-template-columns: 42px 160px;
  grid-auto-rows: 13px;
  row-gap: 6.200px;
  width: 215px;
}

.fields label,
.root label {
  line-height: 14px;
}

.input {
  height: 13px;
  padding-left: 2px;
  background: #fff;
  border: 1px solid #b4b4b4;
  line-height: 11px;
  white-space: nowrap;
}

.select {
  display: flex;
  justify-content: space-between;
}

.select svg {
  width: 8px;
  height: 11px;
  margin-right: 1px;
}

.logo {
  width: 136px;
  height: 56px;
  margin-top: -2px;
}

.root {
  display: flex;
  margin-top: 3.500px;
  position: relative;
}

.root label {
  width: 42px;
  flex: none;
}

.path {
  width: 255px;
}

.btn {
  height: 14px;
  padding: 0;
  border: 1px solid #b2b2b2;
  background: linear-gradient(#f2f2f2, #e6e6e6);
  color: #333;
  font: inherit;
  letter-spacing: inherit;
  line-height: 12px;
  text-align: center;
}

.browse {
  width: 49px;
  margin-left: 4px;
}

.list {
  display: flex;
  flex-direction: column;
  flex: none;
  height: 155px;
  margin-top: 6px;
  background: #fff;
  border: 1px solid #9c9c9c;
}

.list-top {
  display: flex;
  height: 141px;
}

.table {
  flex: 1;
  overflow: hidden;
}

.tr {
  display: grid;
  grid-template-columns: 46.500px 58px 172px 54px 40px;
  align-items: center;
  height: 11.350px;
  padding-left: 3.500px;
  white-space: nowrap;
}

.th {
  height: 16.500px;
}

.sk {
  display: flex;
  align-items: center;
  gap: 3px;
}

.sk svg {
  width: 9px;
  height: 9px;
}

.vbar {
  display: flex;
  flex-direction: column;
  align-items: center;
  width: 12px;
  background: #f2f2f2;
}

.vbar svg {
  width: 8px;
  height: 11px;
}

.vthumb {
  width: 10px;
  height: 17px;
  margin: 1px 0 auto;
  background: #cacaca;
}

.hbar {
  display: flex;
  align-items: center;
  flex: 1;
  padding: 0 13px 0 2px;
  background: #f2f2f2;
}

.hbar svg {
  width: 9px;
  height: 8px;
}

.hthumb {
  width: 220px;
  height: 9px;
  margin: 0 auto 0 1px;
  background: #cacaca;
}

.actions {
  display: flex;
  justify-content: center;
  gap: 5.500px;
  padding-top: 5px;
}

.actions .btn {
  width: 49px;
}

.focus,
.ok {
  border-color: #6fa8da;
}

.confirm {
  left: 544px;
  top: 307px;
  width: 196px;
  height: 114px;
  padding: 0 4px 4px;
  background: #e9e9e9;
  border: 1px solid #d8d8d8;
}

.cf-title {
  flex: none;
  position: relative;
  height: 20px;
  color: #444;
  font-size: 9.800px;
  letter-spacing: -0.24px;
  line-height: 19px;
  text-align: center;
}

.cf-title .close {
  position: absolute;
  right: 0;
  top: -1px;
  width: 20px;
}

.cf-body {
  display: flex;
  align-items: center;
  flex: none;
  gap: 6px;
  height: 56px;
  padding-left: 17px;
  background: #fefefe;
  font-size: 7.900px;
}

.cf-body svg {
  width: 20px;
  height: 20px;
}

.cf-foot {
  display: flex;
  justify-content: flex-end;
  flex: 1;
  padding: 7.500px 6px 0;
  background: #efefef;
}

.ok {
  width: 58px;
  height: 16px;
  line-height: 14px;
}

.search {
  position: absolute;
  left: 957.500px;
  top: 0;
  width: 323px;
  height: 720px;
  background: #5a5a5a;
  color: #fff;
  font-size: 13.100px;
  letter-spacing: -0.3px;
}

.search h1 {
  margin: 0;
  padding: 30px 0 0 37.500px;
  font-size: 23.600px;
  font-weight: 300;
  line-height: 32px;
}

.scope {
  display: flex;
  align-items: center;
  gap: 10px;
  height: 20px;
  margin-top: 15.500px;
  padding-left: 37.500px;
  color: #f0f0f0;
  font-size: 13px;
}

.scope svg {
  width: 12px;
  height: 8px;
  margin-top: 2px;
}

.box {
  display: flex;
  align-items: center;
  width: 248px;
  height: 30px;
  margin: 11.500px 0 0 37.500px;
  padding: 0 2px 0 9.500px;
  background: #fff;
  color: #222;
  font-size: 14px;
}

.hint {
  height: 19px;
  line-height: 19px;
  background: #e37c3e;
  color: #fff;
}

.go {
  display: flex;
  align-items: center;
  justify-content: center;
  width: 26px;
  height: 26px;
  margin-left: auto;
  background: #e37c3e;
}

.go svg {
  width: 16px;
  height: 16px;
}

.results {
  padding-top: 23px;
}

.result {
  display: flex;
  gap: 9.500px;
  height: 56px;
  padding: 9px 0 0 37.500px;
}

.active {
  background: #e37c3e;
}

.tile {
  display: flex;
  align-items: center;
  justify-content: center;
  width: 37px;
  height: 37px;
  background: #078307;
}

.tile svg {
  width: 27px;
  height: 27px;
}

.rname {
  line-height: 20.500px;
}

.rname em {
  font-style: normal;
  opacity: 0.6;
}

.taskbar {
  position: absolute;
  left: 0;
  top: 693px;
  display: flex;
  width: 957.500px;
  height: 27px;
  background: #585858;
  border-top: 1px solid #707070;
}

.start {
  display: flex;
  align-items: center;
  justify-content: center;
  width: 34px;
}

.start svg {
  width: 18px;
  height: 19px;
}

.grip {
  width: 6px;
  height: 24px;
  margin: 1px 4.500px 0 0;
  background: radial-gradient(circle, #2c2c2c 0.700px, transparent 1px) 0 0 / 3px 3px;
}

.task {
  display: flex;
  align-items: center;
  justify-content: center;
  width: 39.300px;
  height: 27px;
  margin-right: 2px;
  border: 1px solid transparent;
}

.task.open {
  background: #7a7a7a;
  border-color: #999;
}

.task.stack {
  padding-right: 4px;
  box-shadow: inset -2px 0 #6a6a6a, inset -3px 0 #999;
}

.task svg {
  width: 21px;
  height: 21px;
}

.cursor {
  position: absolute;
  left: 32px;
  top: 665px;
  width: 10px;
  height: 15px;
}
</style>
